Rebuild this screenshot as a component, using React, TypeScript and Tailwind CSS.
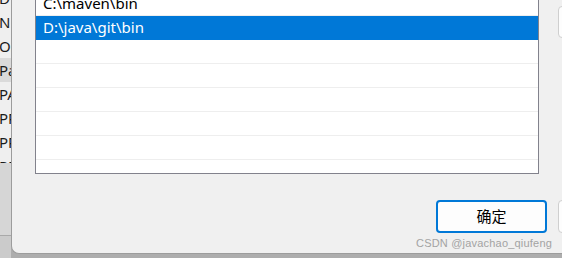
const bgRows = ["D", "NU", "OS", "Pa", "PA", "PR", "PR", "PR"];

const pathRows = ["C:\\maven\\bin", "D:\\java\\git\\bin", "", "", "", "", "", ""];

export default function App() {
  return (
    <div
      className="w-[562px] h-[258px] overflow-hidden flex bg-[#adadad]"
      style={{ fontFamily: '"Noto Sans", "Noto Sans CJK SC", sans-serif' }}
    >
      {/* Window behind the dialog */}
      <div className="w-[11px] h-full shrink-0 flex flex-col overflow-hidden bg-[#cbcbcb]">
        <div className="h-[163px] shrink-0 overflow-hidden bg-[#efefef]">
          <div className="mt-[-14px] flex flex-col">
            {bgRows.map((r, i) => (
              <div
                key={i}
                className={`h-[24px] shrink-0 leading-[24px] text-[15px] text-[#1b1b1b] whitespace-nowrap ml-[-1px] ${
                  i === 3 ? "bg-[#dadada]" : ""
                }`}
              >
                {r}
              </div>
            ))}
          </div>
        </div>
        <div className="h-[73px] shrink-0 bg-[#d6d6d6] border-b border-[#a9a9a9]" />
      </div>

      {/* Dialog */}
      <div className="flex flex-col shrink-0">
        <div className="relative w-[700px] h-[254px] shrink-0 flex flex-col bg-[#f0f0f0] border-l border-b border-[#9c9c9c] rounded-bl-[8px] overflow-hidden">
          <div className="flex items-start">
            <div className="ml-[23px] mt-[-9px] w-[504px] h-[183px] shrink-0 bg-white border border-[#82828c] overflow-hidden">
              {pathRows.map((p, i) => (
                <div
                  key={i}
                  className={`h-[24px] shrink-0 pl-[7px] leading-[23px] text-[15px] whitespace-nowrap ${
                    i === 1
                      ? "bg-[#0078d7] text-white"
                      : "border-b border-[#eeeeee] text-black"
                  }`}
                >
                  {p}
                </div>
              ))}
            </div>
            <div className="ml-[19px] mt-[6px] w-[111px] h-[32px] shrink-0 rounded-[4px] border border-[#cfcfcf] bg-[#fdfdfd]" />
          </div>

          <div className="mt-auto mb-[20px] pl-[424px] flex gap-[11px]">
            <div className="w-[111px] h-[33px] rounded-[4px] border-2 border-[#0078d7] bg-[#fdfdfd] flex items-center justify-center text-[15px] text-black">
              确定
            </div>
            <div className="w-[111px] h-[33px] rounded-[4px] border border-[#cfcfcf] bg-[#fdfdfd]" />
          </div>

          {/* watermark */}
          <div
            className="absolute left-[404px] top-[236px] text-[11px] leading-[14px] tracking-[0.2px] text-[#a3a3a3] whitespace-nowrap"
            style={{ fontFamily: '"Liberation Sans", Arial, sans-serif' }}
          >
            CSDN @javachao_qiufeng
          </div>
        </div>
      </div>
    </div>
  );
}
